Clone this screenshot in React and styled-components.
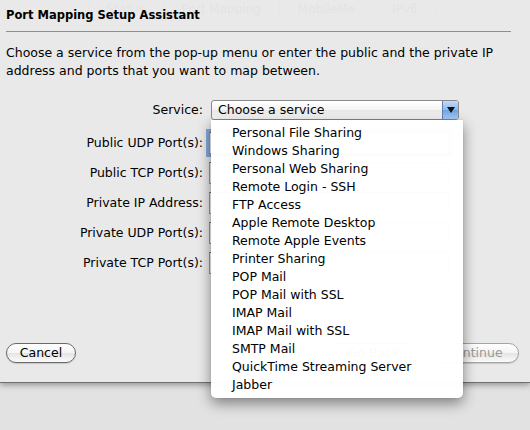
import React from 'react';
import styled, { createGlobalStyle } from 'styled-components';

const Global = createGlobalStyle`
  html, body { margin: 0; padding: 0; }
  body {
    width: 530px; height: 430px; overflow: hidden; background: #dfdfdf;
    font-family: "DejaVu Sans", "Liberation Sans", sans-serif;
    -webkit-font-smoothing: antialiased;
  }
`;

const Stage = styled.div`
  position: relative;
  width: 530px;
  height: 430px;
  overflow: hidden;
  background: #dfdfdf;
`;

/* underlying preferences window, seen faintly through the sheet */
const Backdrop = styled.div`
  display: flex;
  flex-direction: column;
  align-items: center;
  height: 430px;
  background: #e2e2e2;
`;

const Tabs = styled.div`
  display: flex;
  margin-right: 6px;
  margin-top: -3px;
  height: 22px;
  border: 1px solid #cfcfcf;
  border-radius: 4px;
  background: #ececec;
`;

const Tab = styled.div`
  padding: 0 18px;
  font-size: 12px;
  line-height: 22px;
  color: #777;
  border-left: ${p => (p.first ? 'none' : '1px solid #cfcfcf')};
`;

const Sheet = styled.div`
  position: absolute;
  left: 0; top: 0; right: 0;
  height: 383px;
  box-sizing: border-box;
  padding: 7px 19px 0 6px;
  background: rgba(233, 233, 233, 0.94);
  border-bottom: 1px solid #707070;
  box-shadow: 0 2px 6px rgba(0, 0, 0, 0.35);
  display: flex;
  flex-direction: column;
  color: #000;
`;

const Title = styled.div`
  font-size: 11.5px;
  font-weight: bold;
  line-height: 16px;
  height: 16px;
  white-space: nowrap;
`;

const Rule = styled.div`
  margin-top: 8px;
  height: 1px;
  background: #8e8e8e;
`;

const Description = styled.p`
  margin: 12px 0 0;
  font-size: 12.5px;
  line-height: 18px;
  white-space: nowrap;
`;

const Form = styled.div`
  margin-top: 20px;
  display: grid;
  grid-template-columns: 197px 1fr;
  column-gap: 8px;
  row-gap: 8px;
`;

const Label = styled.div`
  text-align: right;
  font-size: 12.5px;
  white-space: nowrap;
  height: ${p => (p.tall ? 22 : 20)}px;
  line-height: ${p => (p.tall ? 22 : 20)}px;
  margin-top: ${p => p.mt || 0}px;
`;

const PopupWrap = styled.div`
  position: relative;
  width: 248px;
  height: 20px;
`;

const Popup = styled.div`
  display: flex;
  height: 20px;
  box-sizing: border-box;
  border: 1px solid #8a8a8a;
  border-radius: 3px;
  background: linear-gradient(#ffffff, #f3f3f3 50%, #e9e9e9 51%, #f7f7f7);
  overflow: hidden;
`;

const PopupText = styled.div`
  flex: 1;
  padding-left: 6px;
  font-size: 12.5px;
  line-height: 18px;
`;

const Arrow = styled.div`
  width: 15px;
  display: flex;
  align-items: center;
  justify-content: center;
  border-left: 1px solid #5f7fb8;
  background: linear-gradient(#c3dbf6, #8db8ec 50%, #6da3e6 51%, #a9d1fa);
`;

const Menu = styled.div`
  position: absolute;
  left: 0;
  top: 20px;
  width: 252px;
  box-sizing: border-box;
  padding: 4px 0;
  background: rgba(255, 255, 255, 0.98);
  border-radius: 0 0 5px 5px;
  box-shadow: 0 5px 14px rgba(0, 0, 0, 0.45), 0 0 1px rgba(0, 0, 0, 0.3);
  z-index: 5;
`;

const MenuItem = styled.div`
  padding-left: 21px;
  font-size: 12.5px;
  line-height: 18px;
  height: 18px;
  white-space: nowrap;
`;

const Field = styled.div`
  margin-top: ${p => p.mt || 0}px;
  margin-left: -2px;
  width: 240px;
  height: 22px;
  box-sizing: border-box;
  background: #fff;
  border: 1px solid #9b9b9b;
  border-top-color: #6f6f6f;
  box-shadow: ${p => (p.focus ? '0 0 0 3px #85a9dc' : 'none')};
`;

const Buttons = styled.div`
  margin-top: auto;
  margin-bottom: 19px;
  margin-right: -8px;
  display: flex;
  align-items: center;
`;

const Button = styled.div`
  height: 20px;
  box-sizing: border-box;
  width: ${p => p.w}px;
  margin-left: ${p => p.ml || 0}px;
  border: 1px solid ${p => (p.disabled ? '#a5a5a5' : '#6a6a6a')};
  border-radius: 10px;
  background: linear-gradient(#ffffff, #f4f4f4 50%, #e4e4e4 51%, #fbfbfb);
  box-shadow: 0 1px 1px rgba(0, 0, 0, 0.15);
  font-size: 12.5px;
  line-height: 18px;
  text-align: center;
  color: ${p => (p.disabled ? '#9a9a9a' : '#000')};
`;

const Spacer = styled.div`flex: 1;`;

const services = [
  'Personal File Sharing',
  'Windows Sharing',
  'Personal Web Sharing',
  'Remote Login - SSH',
  'FTP Access',
  'Apple Remote Desktop',
  'Remote Apple Events',
  'Printer Sharing',
  'POP Mail',
  'POP Mail with SSL',
  'IMAP Mail',
  'IMAP Mail with SSL',
  'SMTP Mail',
  'QuickTime Streaming Server',
  'Jabber',
];

const fields = [
  'Public UDP Port(s):',
  'Public TCP Port(s):',
  'Private IP Address:',
  'Private UDP Port(s):',
  'Private TCP Port(s):',
];

export default function App() {
  return (
    <Stage>
      <Global />
      <Backdrop>
        <Tabs>
          <Tab first>Status</Tab>
          <Tab>Port Mapping</Tab>
          <Tab>MobileMe</Tab>
          <Tab>IPv6</Tab>
        </Tabs>
      </Backdrop>
      <Sheet>
        <Title>Port Mapping Setup Assistant</Title>
        <Rule />
        <Description>
          Choose a service from the pop-up menu or enter the public and the private IP
          <br />
          address and ports that you want to map between.
        </Description>
        <Form>
          <Label>Service:</Label>
          <PopupWrap>
            <Popup>
              <PopupText>Choose a service</PopupText>
              <Arrow>
                <svg width="8" height="6" viewBox="0 0 8 6">
                  <path d="M0 0 H8 L4 6 Z" fill="#111" />
                </svg>
              </Arrow>
            </Popup>
            <Menu>
              {services.map(s => (
                <MenuItem key={s}>{s}</MenuItem>
              ))}
            </Menu>
          </PopupWrap>
          {fields.map((f, i) => (
            <React.Fragment key={f}>
              <Label tall mt={i === 0 ? 4 : 0}>{f}</Label>
              <Field focus={i === 0} mt={i === 0 ? 4 : 0} />
            </React.Fragment>
          ))}
        </Form>
        <Buttons>
          <Button w={70}>Cancel</Button>
          <Spacer />
          <Button w={93}>Go Back</Button>
          <Button w={89} ml={10} disabled>Continue</Button>
        </Buttons>
      </Sheet>
    </Stage>
  );
}
